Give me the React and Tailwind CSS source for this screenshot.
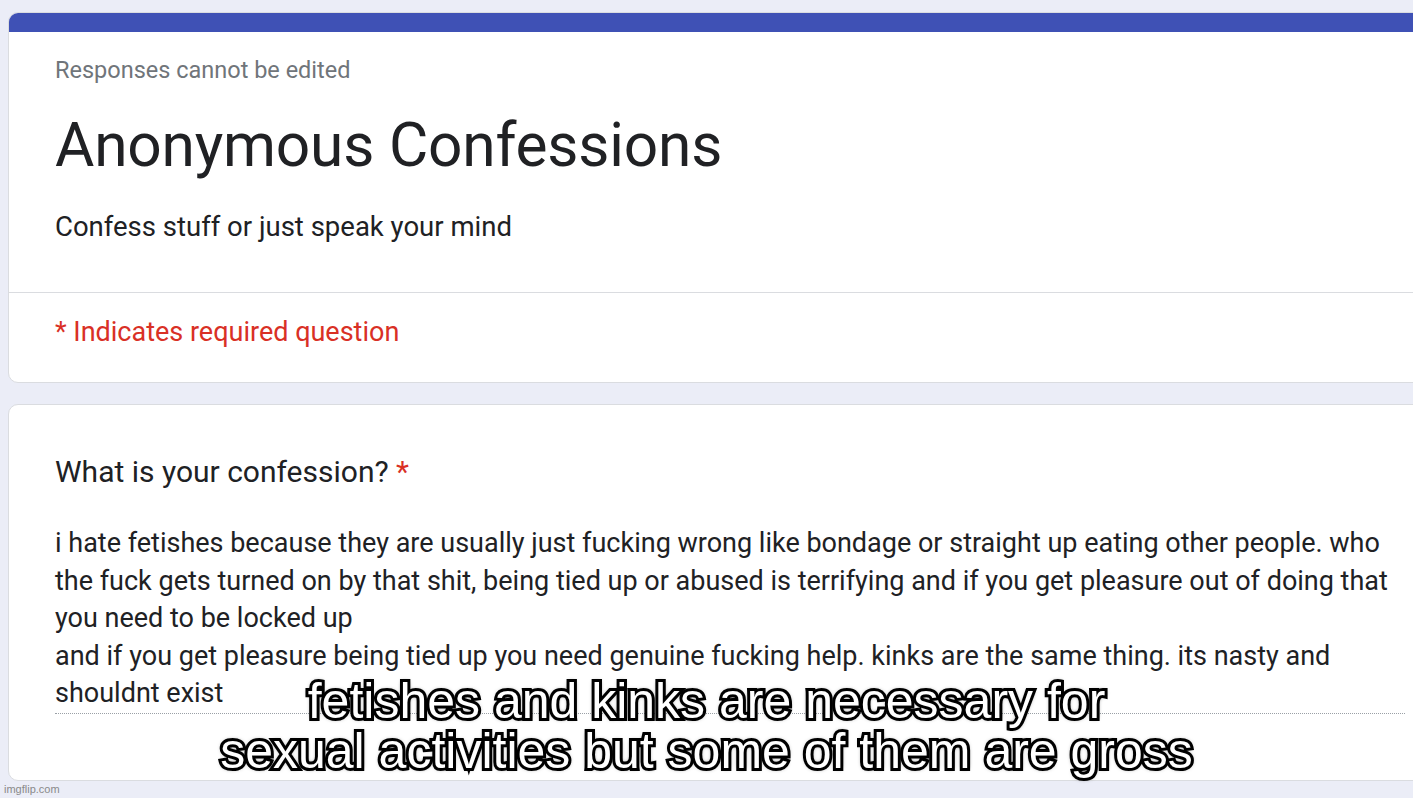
export default function App() {
  const lines = [
    "i hate fetishes because they are usually just fucking wrong like bondage or straight up eating other people. who",
    "the fuck gets turned on by that shit, being tied up or abused is terrifying and if you get pleasure out of doing that",
    "you need to be locked up",
    "and if you get pleasure being tied up you need genuine fucking help. kinks are the same thing. its nasty and",
    "shouldnt exist",
  ];
  return (
    <div className="relative w-[1413px] h-[798px] overflow-hidden bg-[#ebedf7] font-['Roboto',sans-serif]">
      <div className="pt-[12px] pl-[8px]">
        <div className="w-[1452px] rounded-[10px] bg-white border border-[#dadce0] overflow-hidden h-[371px]">
          <div className="h-[19px] bg-[#3f51b5]" />
          <div className="pl-[46px] pr-[46px]">
            <div className="pt-[24px] text-[23.5px] leading-[28px] text-[#70757a]">Responses cannot be edited</div>
            <div className="mt-[30px] text-[60.4px] leading-[64px] text-[#202124] tracking-[-0.2px]">Anonymous Confessions</div>
            <div className="mt-[33px] text-[27.5px] leading-[32px] text-[#202124]">Confess stuff or just speak your mind</div>
          </div>
          <div className="mt-[49px] border-t border-[#dadce0]" />
          <div className="pl-[46px] pt-[23px] text-[27px] leading-[32px] text-[#d93025]">* Indicates required question</div>
        </div>
        <div className="mt-[21px] w-[1452px] rounded-[10px] bg-white border border-[#dadce0] h-[377px] pl-[46px]">
          <div className="pt-[50px] text-[30px] leading-[34px] text-[#202124]">
            What is your confession? <span className="text-[#d93025]">*</span>
          </div>
          <div className="mt-[36px] w-[1350px] text-[27px] leading-[37.5px] text-[#202124] whitespace-nowrap">
            {lines.map((l, i) => (
              <div key={i}>{l}</div>
            ))}
          </div>
          <div className="w-[1350px] border-t border-dotted border-[#9aa0a6]" />
        </div>
      </div>
      <div className="absolute left-[4px] bottom-[3px] text-[11px] leading-[12px] text-[#8a8a8a] font-['Liberation_Sans',sans-serif]">imgflip.com</div>
      <div className="absolute left-0 right-0 top-[676px] text-center font-['Liberation_Sans',Arial,sans-serif] text-[50px] leading-[50px] text-white [paint-order:stroke_fill] [-webkit-text-stroke:6px_#000] [text-shadow:0_0_5px_#000,0_0_3px_#000]">
        fetishes and kinks are necessary for
        <br />
        sexual activities but some of them are gross
      </div>
    </div>
  );
}
